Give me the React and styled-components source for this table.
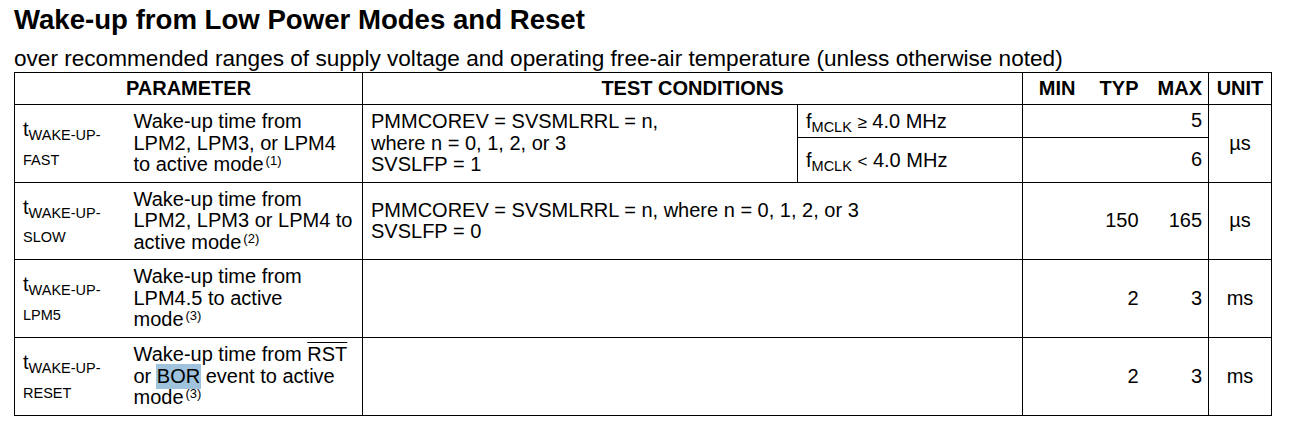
import React from 'react'
import styled, { createGlobalStyle } from 'styled-components'

const GlobalStyle = createGlobalStyle`
  body {
    margin: 0;
    background: #fff;
    color: #000;
    font-family: 'Liberation Sans', Arial, sans-serif;
  }
`

const Page = styled.div`
  padding: 4px 0 0 14px;
`

const Title = styled.h1`
  margin: 0;
  font-size: 27.6px;
  font-weight: bold;
  line-height: 32px;
`

const Subtitle = styled.p`
  margin: 10px 0 0;
  font-size: 22.6px;
  line-height: 26px;
  white-space: nowrap;
`

const Table = styled.table`
  border-collapse: collapse;
  table-layout: fixed;
  width: 1257px;
  font-size: 20px;
  line-height: 21.5px;
`

const Row = styled.tr`
  height: ${({ $h }) => $h}px;
`

const Head = styled.th`
  border: 1px solid #000;
  border-left: ${({ $open }) => ($open === 'left' || $open === 'both' ? 'none' : '1px solid #000')};
  border-right: ${({ $open }) => ($open === 'right' || $open === 'both' ? 'none' : '1px solid #000')};
  font-weight: bold;
  text-align: ${({ $align }) => $align || 'center'};
  padding: 0 6px 0 6px;
  white-space: nowrap;
  vertical-align: middle;
`

const Cell = styled.td`
  border: 1px solid #000;
  border-left: ${({ $open }) => ($open === 'left' || $open === 'both' ? 'none' : '1px solid #000')};
  border-right: ${({ $open }) => ($open === 'right' || $open === 'both' ? 'none' : '1px solid #000')};
  text-align: ${({ $align }) => $align || 'left'};
  padding: ${({ $align }) => ($align === 'right' ? '0 6px 0 0' : $align === 'center' ? '0' : '0 0 0 8px')};
  padding-left: ${({ $pl }) => ($pl !== undefined ? `${$pl}px` : undefined)};
  vertical-align: middle;
  white-space: nowrap;
`

const SymbolCell = styled(Cell)`
  line-height: 23px;
  padding-bottom: 2px;
`

const FreqCell = styled(Cell)`
  padding-top: 3px;
`

const Sub = styled.span`
  font-size: 14.5px;
  line-height: 1;
  vertical-align: -4px;
`

const Sup = styled.sup`
  font-size: 13px;
  vertical-align: 6px;
  line-height: 0;
  margin-left: 2px;
`

const Over = styled.span`
  text-decoration: overline;
  text-decoration-thickness: 1px;
`

const Mark = styled.span`
  background: #9fc3dc;
  padding: 1px 1px 2px;
  margin: 0 -1px;
`

const Rel = styled.span`
  font-size: 17px;
`

const Freq = ({ rel }) => (
  <>
    f<Sub>MCLK</Sub> <Rel>{rel}</Rel> 4.0 MHz
  </>
)

const Sym = ({ a, b }) => (
  <>
    t<Sub>{a}</Sub>
    <br />
    <Sub>{b}</Sub>
  </>
)

export default function App() {
  return (
    <Page>
      <GlobalStyle />
      <Title>Wake-up from Low Power Modes and Reset</Title>
      <Subtitle>
        over recommended ranges of supply voltage and operating free-air temperature (unless otherwise noted)
      </Subtitle>
      <Table>
        <colgroup>
          <col style={{ width: 112 }} />
          <col style={{ width: 236 }} />
          <col style={{ width: 435 }} />
          <col style={{ width: 225 }} />
          <col style={{ width: 59 }} />
          <col style={{ width: 63 }} />
          <col style={{ width: 64 }} />
          <col style={{ width: 63 }} />
        </colgroup>
        <thead>
          <Row $h={32}>
            <Head colSpan={2}>PARAMETER</Head>
            <Head colSpan={2}>TEST CONDITIONS</Head>
            <Head $open="right" $align="right">MIN</Head>
            <Head $open="both" $align="right">TYP</Head>
            <Head $open="left" $align="right">MAX</Head>
            <Head>UNIT</Head>
          </Row>
        </thead>
        <tbody>
          <Row $h={33}>
            <SymbolCell rowSpan={2} $open="right">
              <Sym a="WAKE-UP-" b="FAST" />
            </SymbolCell>
            <Cell rowSpan={2} $open="left" $pl={7}>
              Wake-up time from
              <br />
              LPM2, LPM3, or LPM4
              <br />
              to active mode<Sup>(1)</Sup>
            </Cell>
            <Cell rowSpan={2}>
              PMMCOREV = SVSMLRRL = n,
              <br />
              where n = 0, 1, 2, or 3
              <br />
              SVSLFP = 1
            </Cell>
            <FreqCell>
              <Freq rel="≥" />
            </FreqCell>
            <Cell $open="right" $align="right" />
            <Cell $open="both" $align="right" />
            <Cell $open="left" $align="right">5</Cell>
            <Cell rowSpan={2} $align="center">µs</Cell>
          </Row>
          <Row $h={45}>
            <FreqCell>
              <Freq rel="<" />
            </FreqCell>
            <Cell $open="right" $align="right" />
            <Cell $open="both" $align="right" />
            <Cell $open="left" $align="right">6</Cell>
          </Row>
          <Row $h={77}>
            <SymbolCell $open="right">
              <Sym a="WAKE-UP-" b="SLOW" />
            </SymbolCell>
            <Cell $open="left" $pl={7}>
              Wake-up time from
              <br />
              LPM2, LPM3 or LPM4 to
              <br />
              active mode<Sup>(2)</Sup>
            </Cell>
            <Cell colSpan={2}>
              PMMCOREV = SVSMLRRL = n, where n = 0, 1, 2, or 3
              <br />
              SVSLFP = 0
            </Cell>
            <Cell $open="right" $align="right" />
            <Cell $open="both" $align="right">150</Cell>
            <Cell $open="left" $align="right">165</Cell>
            <Cell $align="center">µs</Cell>
          </Row>
          <Row $h={78}>
            <SymbolCell $open="right">
              <Sym a="WAKE-UP-" b="LPM5" />
            </SymbolCell>
            <Cell $open="left" $pl={7}>
              Wake-up time from
              <br />
              LPM4.5 to active
              <br />
              mode<Sup>(3)</Sup>
            </Cell>
            <Cell colSpan={2} />
            <Cell $open="right" $align="right" />
            <Cell $open="both" $align="right">2</Cell>
            <Cell $open="left" $align="right">3</Cell>
            <Cell $align="center">ms</Cell>
          </Row>
          <Row $h={78}>
            <SymbolCell $open="right">
              <Sym a="WAKE-UP-" b="RESET" />
            </SymbolCell>
            <Cell $open="left" $pl={7}>
              Wake-up time from <Over>RST</Over>
              <br />
              or <Mark>BOR</Mark> event to active
              <br />
              mode<Sup>(3)</Sup>
            </Cell>
            <Cell colSpan={2} />
            <Cell $open="right" $align="right" />
            <Cell $open="both" $align="right">2</Cell>
            <Cell $open="left" $align="right">3</Cell>
            <Cell $align="center">ms</Cell>
          </Row>
        </tbody>
      </Table>
    </Page>
  )
}
